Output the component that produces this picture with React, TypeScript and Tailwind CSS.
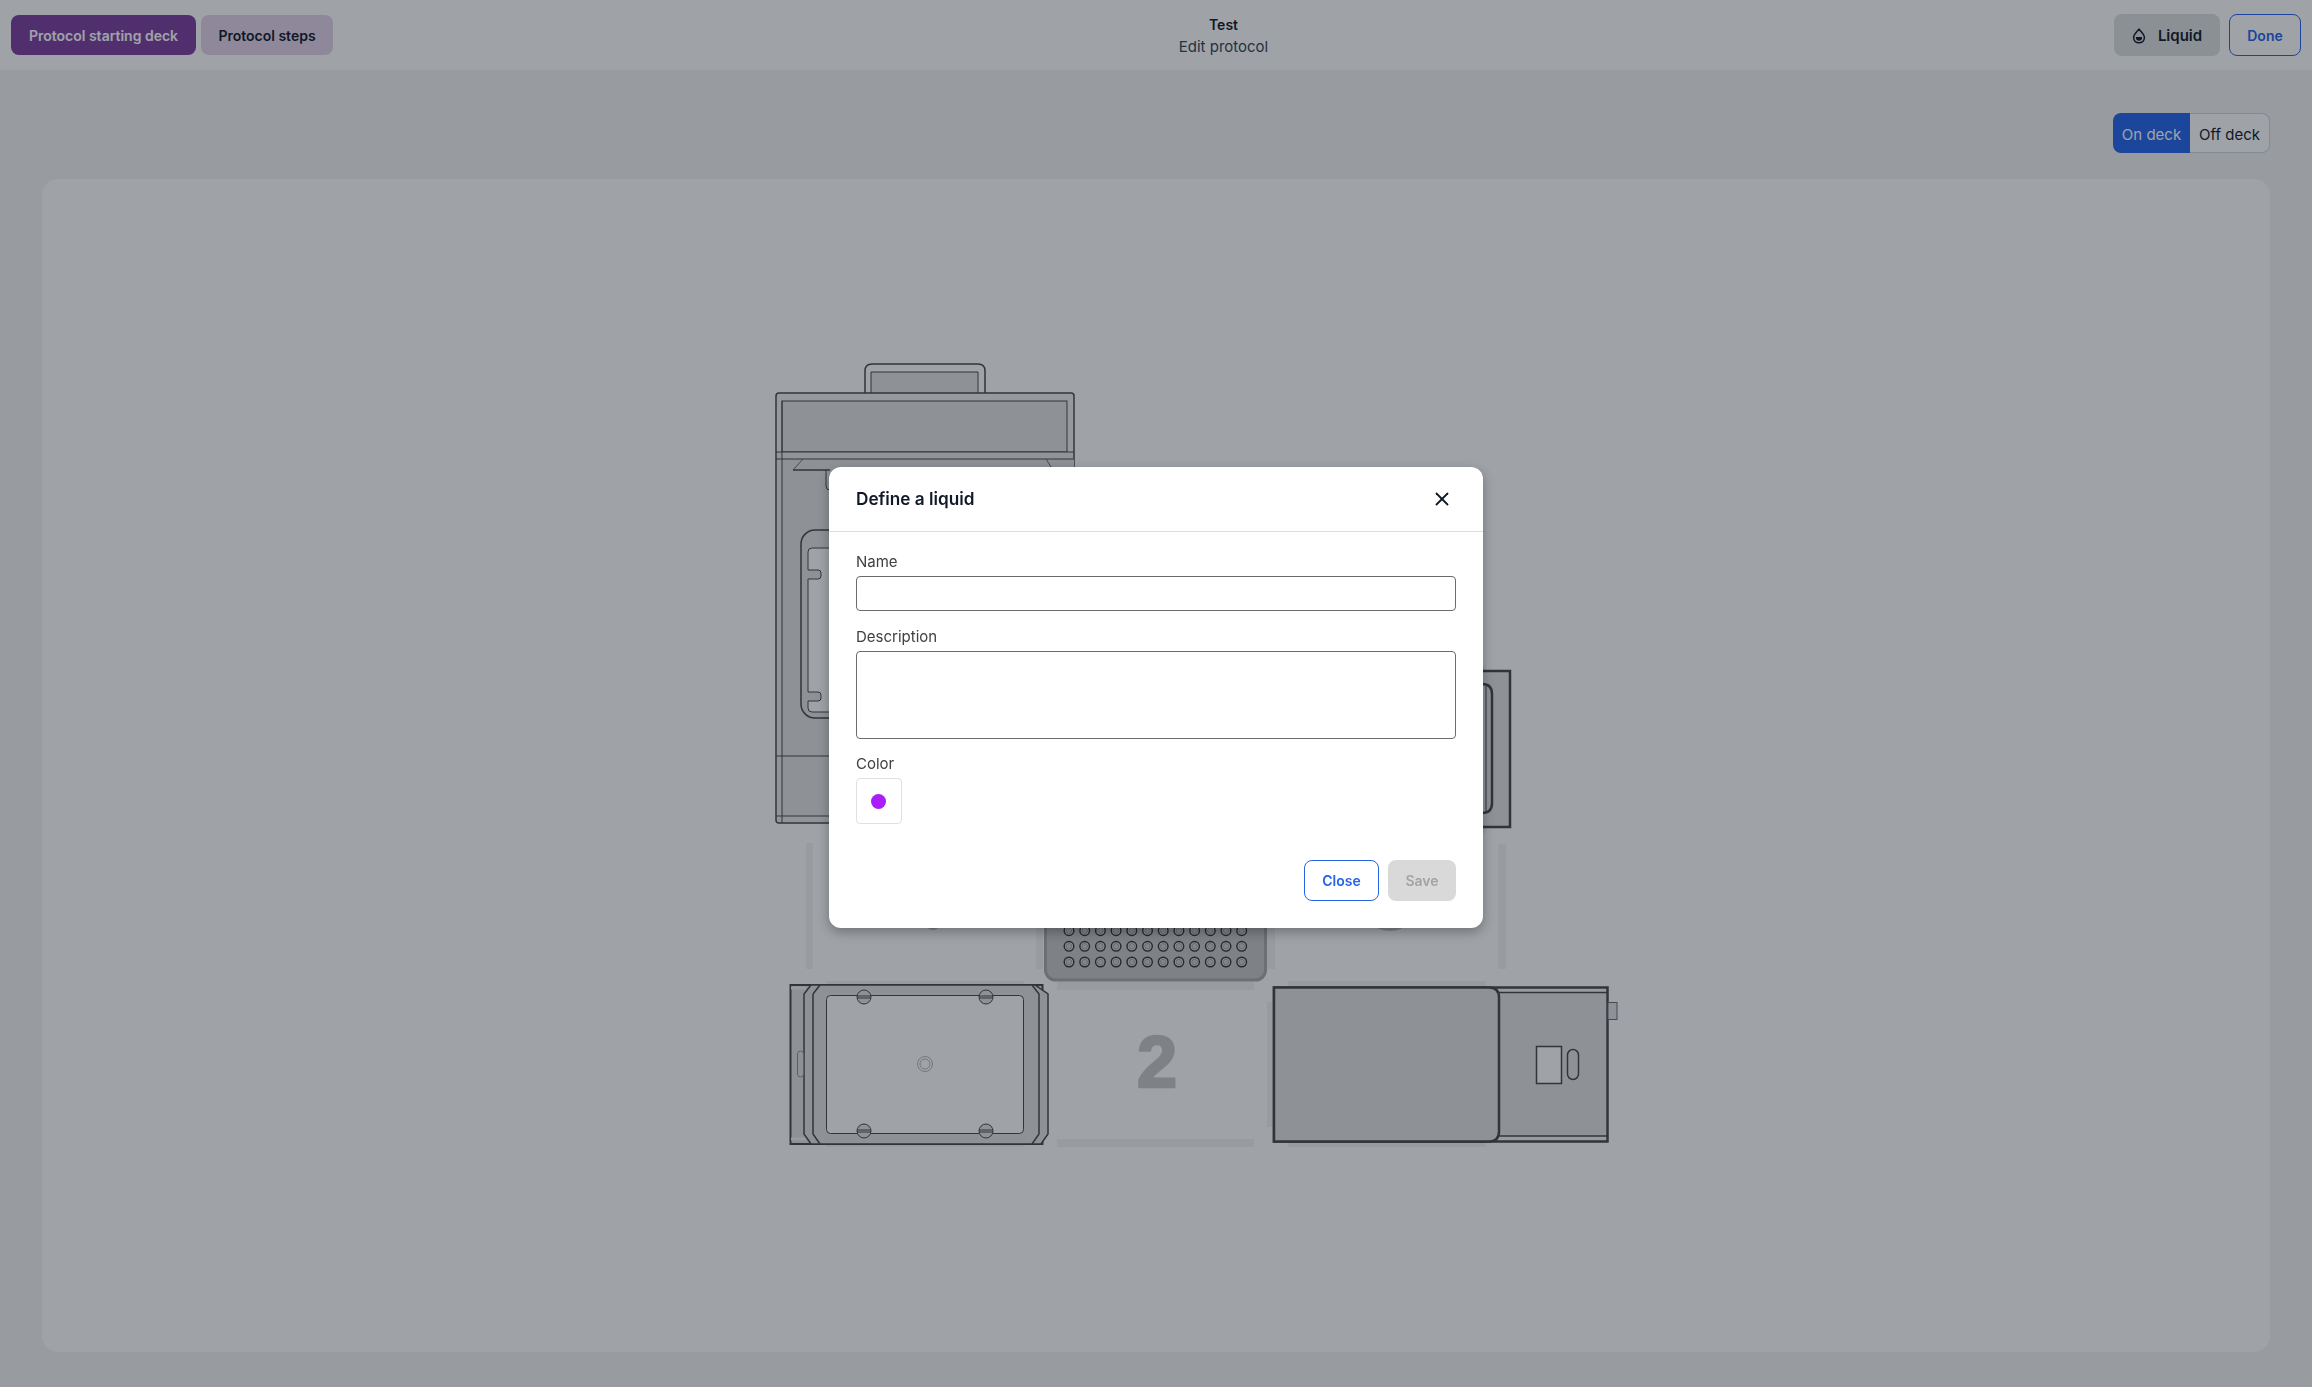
import { X } from "lucide-react";

const wellColumns = Array.from({ length: 12 }, (_, i) => 1069 + i * 15.7);
const wellRows = [930.7, 946.3, 962];
const screws = [
  [864, 997],
  [986, 997],
  [864, 1131],
  [986, 1131],
];

function Droplet() {
  return (
    <svg width="14" height="16" viewBox="0 0 14 16" fill="none">
      <path
        d="M7 1.2 C8.6 3.2 12.4 6.2 12.4 9.6 C12.4 12.7 10 14.8 7 14.8 C4 14.8 1.6 12.7 1.6 9.6 C1.6 6.2 5.4 3.2 7 1.2 Z"
        stroke="currentColor"
        strokeWidth="1.5"
      />
      <path d="M3.9 9 H10.1 V9.8 C10.1 11.7 8.7 12.8 7 12.8 C5.3 12.8 3.9 11.7 3.9 9.8 Z" fill="currentColor" />
    </svg>
  );
}

function Deck() {
  return (
    <svg width="860" height="800" viewBox="770 360 860 800" fill="none" className="block">
      {/* slot marks */}
      <g fill="#f3f3f3">
        <rect x="806" y="843" width="7" height="126" />
        <rect x="1498" y="844" width="8" height="125" />
        <rect x="1036" y="900" width="7" height="69" />
        <rect x="1267" y="900" width="8" height="69" />
        <rect x="826" y="981" width="198" height="5" />
        <rect x="826" y="1143" width="198" height="4" />
        <rect x="1057" y="982" width="197" height="8" />
        <rect x="1057" y="1139" width="197" height="8" />
        <rect x="1288" y="981" width="198" height="6" />
        <rect x="1288" y="1142" width="198" height="5" />
        <rect x="1267" y="1002" width="7" height="125" />
        <rect x="1480" y="665" width="6" height="168" />
      </g>

      {/* thermocycler */}
      <path
        d="M865 393 V371 Q865 364 872 364 H978 Q985 364 985 371 V393"
        fill="#ffffff"
        stroke="#484949"
        strokeWidth="1.5"
      />
      <path d="M871 393 V372 H978 V393" fill="#e3e3e3" stroke="#484949" strokeWidth="1" />
      <rect x="776" y="393" width="298" height="430" rx="3" fill="#f1f1f1" stroke="#484949" strokeWidth="1.5" />
      <rect x="782" y="401" width="285" height="51" fill="#e3e3e3" stroke="#484949" strokeWidth="1" />
      <rect x="777" y="452" width="296" height="370" fill="#e8e8e8" />
      <rect x="782" y="459" width="292" height="357" fill="#e3e3e3" />
      <path d="M776 452 H1074 M776 459 H1074 M776 756 H1074 M776 816 H1074 M782 401 V823" stroke="#484949" strokeWidth="1" />
      <path d="M793 470 L803 459 M1046 459 L1053 470" stroke="#6a6b6c" strokeWidth="1" />
      <path d="M793 470 H830" stroke="#484949" strokeWidth="1.5" />
      <path d="M830 490 Q826 490 826 486 V470" stroke="#484949" strokeWidth="1" />
      <rect x="801" y="530" width="120" height="188" rx="14" fill="#e3e3e3" stroke="#484949" strokeWidth="1.5" />
      <path
        d="M840 548 H812 Q808 548 808 552 V570 H818 Q821 570 821 573 V576 Q821 579 818 579 H808 V692 H818 Q821 692 821 695 V698 Q821 701 818 701 H808 V708 Q808 712 812 712 H840 Z"
        fill="#ffffff"
        stroke="#484949"
        strokeWidth="1"
      />

      {/* heater shaker, upper right */}
      <rect x="1300" y="671" width="210" height="156" fill="#e3e3e3" stroke="#484949" strokeWidth="2.5" />
      <path d="M1300 684 H1482 Q1492 684 1492 694 V803 Q1492 813 1482 813 H1300" stroke="#484949" strokeWidth="2.5" />
      <path d="M1486 684 V813" stroke="#484949" strokeWidth="1" />

      {/* plate in the middle row */}
      <rect x="1045.5" y="800" width="220" height="180" rx="10" fill="#c8c8c8" stroke="#aaaaaa" strokeWidth="3" />
      {wellRows.map((cy) =>
        wellColumns.map((cx) => (
          <g key={`${cx}-${cy}`}>
            <circle cx={cx} cy={cy} r="4.8" fill="#dcdcdc" stroke="#333434" strokeWidth="1.4" />
            <circle cx={cx} cy={cy} r="2.8" fill="#cccccc" stroke="#8a8a8a" strokeWidth="0.6" />
          </g>
        ))
      )}
      <ellipse cx="933" cy="926" rx="6" ry="4" fill="#c8c8c8" />
      <ellipse cx="1390" cy="925" rx="14" ry="6" fill="#c8c8c8" />

      {/* lower left module */}
      <rect x="790.5" y="985" width="252" height="159" fill="#e3e3e3" stroke="#484949" strokeWidth="2" />
      <path d="M791 988 H806 M791 1139 H806" stroke="#f3f3f3" strokeWidth="3" />
      <path d="M804 994 L811 985 H1035 L1048 994 V1134 L1041 1144 H811 L804 1134 Z" fill="#e3e3e3" stroke="#484949" strokeWidth="1.5" />
      <path d="M813 994 L820 985 M1032 985 L1039 994 V1134 L1032 1144 M820 1144 L813 1134 V994" stroke="#484949" strokeWidth="1.5" />
      <rect x="797.5" y="1051" width="6" height="26" rx="3" stroke="#8d8f91" strokeWidth="1" />
      <rect x="826.5" y="995.5" width="197" height="138" rx="4" fill="#ffffff" stroke="#484949" strokeWidth="1" />
      {screws.map(([cx, cy]) => (
        <g key={`${cx}-${cy}`}>
          <circle cx={cx} cy={cy} r="7" fill="#e3e3e3" stroke="#484949" strokeWidth="1" />
          <path d={`M${cx - 7} ${cy - 1} H${cx + 7} M${cx - 7} ${cy + 1} H${cx + 7}`} stroke="#484949" strokeWidth="1" />
        </g>
      ))}
      <circle cx="925" cy="1064" r="7.5" stroke="#a3a4a5" strokeWidth="0.8" />
      <circle cx="925" cy="1064" r="5" stroke="#a3a4a5" strokeWidth="0.8" />

      {/* slot label */}
      <text
        x="1157"
        y="1087"
        textAnchor="middle"
        fontFamily="'Liberation Sans', sans-serif"
        fontWeight="700"
        fontSize="72"
        fill="#c8c8c8"
        stroke="#c8c8c8"
        strokeWidth="2.5"
        strokeLinejoin="round"
      >
        2
      </text>

      {/* lower right module */}
      <rect x="1274" y="987.5" width="333.5" height="154" fill="#f3f3f3" stroke="#484949" strokeWidth="2.5" />
      <rect x="1480" y="993" width="126" height="143" fill="#e3e3e3" />
      <path d="M1495 992.5 H1607 M1495 1136 H1607" stroke="#484949" strokeWidth="1.5" />
      <path d="M1274 987.5 H1489 Q1499 987.5 1499 997.5 V1131.5 Q1499 1141.5 1489 1141.5 H1274 Z" fill="#e3e3e3" stroke="#484949" strokeWidth="2.5" />
      <rect x="1608" y="1002.5" width="9" height="17" fill="#e3e3e3" stroke="#6a6b6c" strokeWidth="1" />
      <rect x="1536.5" y="1046.5" width="25" height="37" fill="#ffffff" stroke="#484949" strokeWidth="1.5" />
      <rect x="1567.5" y="1049.5" width="11" height="30" rx="5.5" stroke="#484949" strokeWidth="1.5" />
    </svg>
  );
}

export default function App() {
  return (
    <div className="relative h-[1387px] overflow-hidden bg-[#f3f3f3] font-['Inter',sans-serif] text-[#111827]">
      <header className="flex h-[70px] items-center justify-between bg-white px-[11px]">
        <div className="flex gap-[5px]">
          <button className="h-10 w-[185px] rounded-lg bg-[#7e3f9f] text-[14px] font-semibold text-white">
            Protocol starting deck
          </button>
          <button className="h-10 w-[132px] rounded-lg bg-[#e4d2ea] text-[14px] font-semibold text-[#111827]">
            Protocol steps
          </button>
        </div>
        <div className="flex flex-col items-center pt-px">
          <span className="text-[14px] leading-[22px] font-semibold">Test</span>
          <span className="text-[15px] leading-[22px] text-[#374151]">Edit protocol</span>
        </div>
        <div className="flex gap-[9px]">
          <button className="flex h-[42px] w-[106px] items-center justify-center gap-[12px] rounded-lg bg-[#dedfe0] pt-[2px] text-[15px] font-semibold">
            <Droplet />
            Liquid
          </button>
          <button className="h-[42px] w-[72px] rounded-lg border border-[#2563eb] bg-white text-[14px] font-semibold text-[#2563eb]">
            Done
          </button>
        </div>
      </header>

      <main className="px-[42px]">
        <div className="flex justify-end pt-[43px] pb-[26px]">
          <div className="flex h-10 text-[15px]">
            <button className="w-[77px] rounded-l-lg bg-[#2563eb] pt-[4px] text-white">On deck</button>
            <button className="w-[80px] rounded-r-lg border border-l-0 border-[#d1d5db] bg-white pt-[4px] text-[#111827]">
              Off deck
            </button>
          </div>
        </div>
        <section className="h-[1173px] rounded-2xl bg-white pt-[181px] pl-[728px]">
          <Deck />
        </section>
      </main>

      <div className="fixed inset-0 bg-[#101a26]/40" />

      <div className="absolute inset-0 flex justify-center pt-[467px]">
        <div className="h-[461px] w-[654px] rounded-xl bg-white shadow-[0_4px_12px_rgba(0,0,0,0.3)]">
          <div className="flex h-[65px] items-center justify-between border-b border-[#dedede] px-[27px]">
            <h2 className="text-[17.2px] font-semibold text-[#111827]">Define a liquid</h2>
            <X size={22} strokeWidth={2} className="mr-[3px] text-[#111827]" />
          </div>
          <div className="px-[27px] pt-[20px]">
            <label className="block text-[15px] leading-[20px] text-[#404040]">Name</label>
            <input className="mt-[4px] block h-[35px] w-full rounded-[4px] border border-[#6b6b6b] bg-white" />
            <label className="mt-[16px] block text-[15px] leading-[20px] text-[#404040]">Description</label>
            <textarea className="mt-[4px] block h-[88px] w-full resize-none rounded-[4px] border border-[#6b6b6b] bg-white" />
            <label className="mt-[15px] block text-[15px] leading-[20px] text-[#404040]">Color</label>
            <div className="mt-[4px] flex h-[46px] w-[46px] items-center justify-center rounded-[4px] border border-[#e0e0e0]">
              <span className="-ml-px h-[15px] w-[15px] rounded-full bg-[#aa1efa]" />
            </div>
            <div className="mt-[36px] flex justify-end gap-[9px]">
              <button className="h-[41px] w-[75px] rounded-lg border border-[#2563eb] bg-white text-[14px] font-semibold text-[#2563eb]">
                Close
              </button>
              <button className="h-[41px] w-[68px] rounded-lg bg-[#d9d9d9] text-[14px] font-semibold text-[#a3a3a3]">
                Save
              </button>
            </div>
          </div>
        </div>
      </div>
    </div>
  );
}
